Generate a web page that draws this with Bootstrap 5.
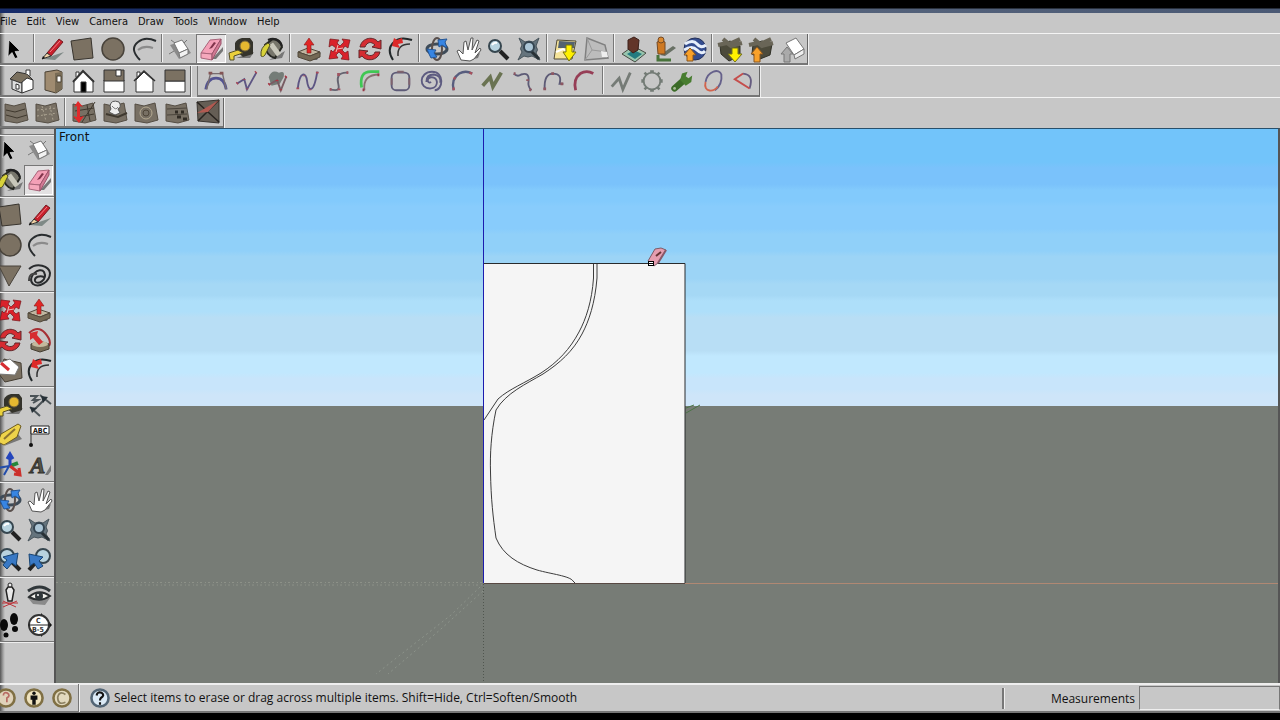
<!DOCTYPE html>
<html lang="en">
<head>
<meta charset="utf-8">
<meta name="viewport" content="width=device-width, initial-scale=1">
<title>SketchUp</title>
<link href="https://cdn.jsdelivr.net/npm/bootstrap@5.3.0/dist/css/bootstrap.min.css" rel="stylesheet">
<style>
  body { font: 12px/16px "Open Sans", "Noto Sans", sans-serif; background: #000; color: #111; }
  .app { background: linear-gradient(to right, #555 0, #a0a0a0 3px, #c7c7c7 5px); }
  .title-strip { height: 13px; background: linear-gradient(#000 0 8px, transparent 9px), linear-gradient(to right, #172c69, #1c3263 30%, #56647c 60%, #4b5a75); }
  .menus { height: 20px; padding-top: 1px; gap: 10px; font: 11px/16px "DejaVu Sans Condensed", "DejaVu Sans", sans-serif; }
  .menus a { color: #111; text-decoration: none; }
  .toolrow { height: 32px; border-top: 1px solid #f4f4f4; }
  .toolrow.low { height: 31px; }
  .strip { border-right: 1px solid #666; border-bottom: 2px solid #777; box-shadow: 1px 0 #f0f0f0; }
  .strip-main { width: 808px; padding-left: 0; }
  .strip-views { width: 191px; padding-left: 7px; }
  .strip-curves { width: 563px; margin-left: 6px; padding-left: 3px; border-left: 1px solid #777; }
  .strip-sand { width: 224px; }
  .tool { flex: 1 1 0; min-width: 0; height: 29px; padding: 0; border: 0; border-radius: 0; background: none; display: flex; align-items: center; justify-content: center; }
  .tool svg { width: 28px; height: 28px; flex: none; }
  .strip-curves .tool svg { width: 26px; height: 26px; }
  .strip-sand .tool { height: 27px; }
  .tool.pressed { background: #e3e1e2; box-shadow: inset 1px 1px #777, inset -1px -1px #fff; }
  .divide { flex: 0 0 6px; height: 28px; display: flex; justify-content: center; }
  .divide::before { content: ""; width: 2px; background: #777; border-right: 1px solid #f2f2f2; }
  .palette { width: 56px; flex: none; overflow: hidden; border-right: 2px solid #555; border-top: 1px solid #666; }
  .palette-cap { height: 6px; border-bottom: 1px solid #777; box-shadow: 0 1px #eee; }
  .pair { display: grid; grid-template-columns: 29px 29px; margin-left: -5px; }
  .pair .tool { height: 30px; }
  .pair-end { height: 5px; padding-top: 1px; }
  .pair-end::before { content: ""; display: block; height: 2px; background: #777; border-bottom: 1px solid #eee; }
  .scene { border-top: 1px solid #28506c; border-right: 2px solid #555; min-width: 0;
    background: linear-gradient(#72c4fa 0 6%, #7ac2fb 7% 10%, #82cafc 11% 13%, #88ccfc 14% 18%, #90d0f9 19% 22%, #9cd4f6 23% 27%, #a5d8f5 28% 30%, #aedffa 31% 33%, #b8def5 34% 40%, #c1e8fe 41% 44%, #c8e5fb 45% 47%, #cee5f9 48% 50%, #777c76 50%); }
  .view-name { left: 3px; top: 0; font-family: "DejaVu Sans", sans-serif; }
  .statusbar { height: 30px; border-top: 2px solid #eee; border-bottom: 2px solid #777; }
  .statusbar .tool { flex: none; width: 28px; height: 26px; }
  .statusbar .tool svg { width: 24px; height: 24px; }
  .info-buttons { margin-left: -8px; }
  .measure-label { border-left: 2px solid #777; box-shadow: inset 1px 0 #eee; width: 137px; height: 21px; padding: 3px 4px 0 0; }
  .measure-box { width: 141px; height: 24px; background: #c7c7c7; border: 1px solid #777; border-bottom-color: #eee; border-radius: 0; outline: 0; }
  .letterbox { height: 7px; background: #000; }
</style>
</head>
<body>
<div class="app vh-100 d-flex flex-column overflow-hidden">
  <div class="title-strip flex-shrink-0"></div>
  <nav class="menus d-flex flex-shrink-0" aria-label="Main menu">
    <a href="#">File</a><a href="#">Edit</a><a href="#">View</a><a href="#">Camera</a><a href="#">Draw</a><a href="#">Tools</a><a href="#">Window</a><a href="#">Help</a>
  </nav>
  <div class="toolrow d-flex flex-shrink-0">
    <div class="strip strip-main d-flex" role="toolbar" aria-label="Getting started" data-tools="select | pencil rect circle arc | component eraser* tape paint | pushpull move rotate offset | orbit hand zoom extents | addloc terrain | photo person earth | getmodel share sharecomp"></div>
  </div>
  <div class="toolrow d-flex flex-shrink-0">
    <div class="strip strip-views d-flex" role="toolbar" aria-label="Views" data-tools="iso topview front right back left"></div>
    <div class="strip strip-curves d-flex" role="toolbar" aria-label="Curves" data-tools="c1 c2 c3 c4 c5 c6 c7 c8 c9 c10 c11 c12 c13 | c14 c15 wrench c17 c18"></div>
  </div>
  <div class="toolrow low d-flex flex-shrink-0">
    <div class="strip strip-sand d-flex" role="toolbar" aria-label="Sandbox" data-tools="sand1 sand2 | smoove stamp drape detail flip"></div>
  </div>
  <main class="d-flex flex-grow-1 overflow-hidden">
    <aside class="palette" aria-label="Large tool set">
      <div class="palette-cap"></div>
      <div class="pair" data-tools="select component paint eraser*"></div><div class="pair-end"></div>
      <div class="pair" data-tools="rect pencil circle arc polygon freehand"></div><div class="pair-end"></div>
      <div class="pair" data-tools="move pushpull rotate follow scale offset"></div><div class="pair-end"></div>
      <div class="pair" data-tools="tape dimension protractor label axes text3d"></div><div class="pair-end"></div>
      <div class="pair" data-tools="orbit hand zoom extents previous next"></div><div class="pair-end"></div>
      <div class="pair" data-tools="camera look walk section"></div><div class="pair-end"></div>
    </aside>
    <section class="scene flex-grow-1 position-relative overflow-hidden" aria-label="Drawing area">
      <svg class="position-absolute top-0 start-0 w-100 h-100" viewBox="0 0 1222 554" preserveAspectRatio="xMidYMid slice" fill="none">
        <path d="M0 453.500H427M20 456H427" stroke="#8d9188" stroke-dasharray="2 3 1 2"/>
        <path d="M427.500 455V554" stroke="#50564f" stroke-dasharray="1 2"/>
        <path d="M424 458 395 486 320 545M427 462 385 500 332 545" stroke="#8d948b" stroke-dasharray="2 3"/>
        <path d="M630 284 644 276M630 279l8-3" stroke="#4b7447"/>
        <path d="M428 454.500H1222" stroke="#b08873"/>
        <path d="M428 135H629V454H428Z" fill="#f5f5f5"/>
        <path d="M427.500 0V454" stroke="#1c1cae"/>
        <path d="M428 134.500H629V454" stroke="#282a2c"/>
        <path d="M428 454.500H629" stroke="#584943"/>
        <g stroke="#3c3c3c">
          <path d="M537.500 135V149C536 172 530 190 523 203C514 220 502 233 485 244C469 254 453 260 442 270L428 291"/>
          <path d="M541 135V149C539 174 533 192 526 205C517 222 504 234 487 245C470 255 450 264 440 281C435 305 434 325 434.500 343C435 370 437 388 440 409C447 426 462 435 481 441C495 445 514 447 517 452L519 454"/>
        </g>
        <g transform="translate(591 118)"><path d="m1 14 7-12 6-1 5 2-8 13-4 3Z" fill="#e59daf" stroke="#7d5b66"/><path d="m11 16 8-13" stroke="#895969" stroke-width="2"/><path d="m9 9 5-4" stroke="#633" stroke-width="2"/><rect x="1.500" y="14.500" width="5" height="4" fill="#fff" stroke="#000"/><path d="M2 16.500h4" stroke="#000"/></g>
      </svg>
      <div class="view-name position-absolute">Front</div>
    </section>
  </main>
  <footer class="statusbar d-flex align-items-center flex-shrink-0">
    <div class="info-buttons d-flex" data-tools="geo credit claim"></div>
    <div class="divide"></div>
    <div class="d-flex ms-1" data-tools="help"></div>
    <div class="flex-grow-1">Select items to erase or drag across multiple items. Shift=Hide, Ctrl=Soften/Smooth</div>
    <label class="measure-label text-end" for="measurements">Measurements</label>
    <input class="measure-box" id="measurements" type="text">
  </footer>
  <div class="letterbox flex-shrink-0"></div>
</div>

<script>
const sheet = (inner) => `<path d="m3 6 9 2 11-3 3 17-11 3-12-2Z" fill="#787064" stroke="#544d43"/>${inner}`;
const house = (inner) => `<g stroke="#333">${inner}</g>`;
const glass = (x) => `<path d="m16 16 8 8" stroke="#222" stroke-width="4"/><circle cx="11" cy="11" r="6" fill="#b8d3df" stroke="#36464f" stroke-width="2"/><path d="M8 10q2-3 5-2" stroke="#fff" stroke-width="2"/>${x}`;
const badge = (ring, face, inner) => `<circle cx="14" cy="14" r="10" fill="${face}" stroke="${ring}" stroke-width="3"/>${inner}`;
const icons = {
  select: `<path d="m8 5 11 11-5 .5 3 6-3 1-3-6-4 4Z" fill="#000" stroke="#eee" stroke-width=".6"/>`,
  pencil: `<path d="m5 24 21-7-9 8Z" fill="#7e8986"/><path d="m9 18 12-14 4 3-12 14Z" fill="#c9202c" stroke="#751c22"/><path d="m12 17 10-11" stroke="#f28088"/><path d="m4 24 5-6 4 3Z" fill="#f0d2a4" stroke="#333"/><path d="m4 24 3-1-2-2Z" fill="#111"/>`,
  rect: `<path d="m3 6 20-3 2 20-19 2Z" fill="#7b7162" stroke="#38342e"/>`,
  circle: `<circle cx="14" cy="14" r="11" fill="#7b7162" stroke="#48433b" stroke-width="1.500"/>`,
  polygon: `<path d="M3 5h22L13 25Z" fill="#7b7162" stroke="#48433b"/>`,
  arc: `<path d="M8 15q6-5 15-2" stroke="#8b8b8b" stroke-width="2"/><path d="M10 25Q-1 14 8 7q7-6 18-1" stroke="#292d2f" stroke-width="2"/>`,
  freehand: `<path d="M4 8c8-7 20-3 21 4 0 9-11 15-17 11-7-7 7-18 11-12 4 8-7 14-9 9-1-4 5-6 9-4" stroke="#292b2d" stroke-width="2"/><path d="M4 20q0-9 8-7" stroke="#444" stroke-width="2"/>`,
  component: `<path d="m4 10 13-4 8 12-12 6Z" fill="#8b8b8b"/><path d="m8 8 8-3 6 9-9 4Z" fill="#fff" stroke="#777"/><path d="m13 18 9-4v5l-8 4Z" fill="#f2f2f2" stroke="#777"/><path d="m5 5 4 3m12-3-3 3M3 19l5-3" stroke="#777"/>`,
  eraser: `<path d="m15 24 11-12v4l-7 8Z" fill="#777"/><path d="m4 18 9-13 11-1-9 15Z" fill="#f4a0b7" stroke="#a8657a"/><path d="M4 18v5l11 2v-6Z" fill="#f5a8bc" stroke="#a8657a"/><path d="M15 19 24 4v5l-9 16Z" fill="#d27a94" stroke="#9b536a"/><path d="m12 14 5-7 2 1-4 5Z" fill="#80344b"/>`,
  tape: `<path d="M9 23h14l4-6Z" fill="#777"/><path d="M8 8q2-4 7-5h8l3 4v12l-10 3-8-7Z" fill="#34332b"/><circle cx="18" cy="11" r="5" fill="#e5b830" stroke="#77663a"/><path d="m2 18 9-3 5 3-9 3v4H3Z" fill="#ead03b" stroke="#554e27"/>`,
  paint: `<path d="m11 25 13-2 3-7Z" fill="#777"/><path d="m8 9 7-5q8 0 9 8l-7 11q-9-2-10-13Z" fill="#77766b" stroke="#262722" stroke-width="2"/><path d="m13 9 8 11" stroke="#c8c7ba" stroke-width="5"/><path d="M10 5q9-4 14 6" stroke="#222" stroke-width="2"/><path d="M10 8Q2 12 3 21q3 2 5-3l4-8Z" fill="#d8d23a" stroke="#535122"/>`,
  pushpull: `<path d="m14 25 12-7-4 7Z" fill="#666"/><path d="m3 17 10-4 12 4-10 4Z" fill="#c0b6a0" stroke="#51483a"/><path d="m3 17 12 4 10-4v5l-10 4-12-4Z" fill="#746955" stroke="#51483a"/><path d="m14 3 5 7h-3v8h-4v-8H9Z" fill="#e22625" stroke="#841b1b" stroke-width=".6"/>`,
  move: `<path d="m5 4 9 1-2 3 3 3 4-4-2-3 8 1-2 8-3-2-3 4 3 3 3-2 1 9-8-1 2-3-4-4-3 3 2 3-9 1 2-9 2 2 3-4-4-3-3 2Z" fill="#d9222a" stroke="#75151a" stroke-width=".7"/><path d="m13 10-2 7m7-4-6 1" stroke="#efb9b5"/>`,
  rotate: `<path d="M4 12C6 2 18 1 22 7l3-2v9l-9-2 3-2c-4-4-8-3-10 2Zm20 5c-2 9-14 10-18 4l-3 2v-8l9 1-3 2c4 4 9 3 10-1Z" fill="#d52b31" stroke="#62272a"/>`,
  offset: `<path d="M7 25Q0 14 8 7q6-6 18-2" stroke="#22282a" stroke-width="2"/><path d="M12 21q-1-12 12-12" stroke="#333" stroke-width="1.500"/><path d="m17 8-5 1 2 4-8-2 2-8 3 2 5-2Z" fill="#dc2928"/>`,
  orbit: `<ellipse cx="14" cy="14" rx="10" ry="5" stroke="#3e4b58" stroke-width="3"/><ellipse cx="14" cy="14" rx="5" ry="11" stroke="#594f4c" stroke-width="2"/><path d="m15 5 9-1-2 3 2 6-5-3-3 2ZM4 14l9 1-2 3 3 4-6 1-2-4Z" fill="#3785e3" stroke="#255695"/>`,
  hand: `<path d="m11 26 13-3 2-5Z" fill="#777"/><path d="m7 25-4-9 2-1 4 4 1-12 2-1 2 9 3-12h2l-1 12 5-10 2 1-4 12 5-5 1 2-7 9-4 2Z" fill="#fff" stroke="#555"/>`,
  zoom: glass(''),
  extents: `<path d="m4 3 6 4q4-2 8 0l6-4-3 8q3 4 0 7l4 7-8-4q-4 2-8 0l-6 4 4-8q-3-3 0-7Z" fill="#65747d" stroke="#48545b"/><path d="m16 16 8 8" stroke="#283136" stroke-width="3"/><circle cx="14" cy="12" r="5" fill="#acc6d6" stroke="#344450" stroke-width="2"/>`,
  addloc: `<path d="m6 5 19 1-4 18H3Z" fill="#f6e49a" stroke="#514b37"/><path d="m8 6 16 1-1 6H7Z" fill="#536271"/><path d="m5 17 7-3 7 4" stroke="#fff" stroke-width="2"/><path d="M15 10h6v7h4l-7 9-6-9h3Z" fill="#fff000" stroke="#767413"/>`,
  terrain: `<path d="m5 3 18 7 3 13-23 2Z" fill="#bcbcbc" stroke="#808080" stroke-width="1.500"/><path d="m5 3 5 12 15 2M10 15l-7 10" stroke="#999"/><path d="m19 16 6 1 1 5h-6Z" fill="#eee"/>`,
  photo: `<path d="m3 19 11-8 13 7-11 9Z" fill="#98c5ae" stroke="#474b42"/><path d="m8 19 8 5 7-5-8-4Z" fill="#237b80"/><path d="m9 5 6-3 5 3-1 10-5 3-5-4Z" fill="#623529" stroke="#3c201a"/>`,
  person: `<path d="m11 20 13-9 3 2-11 8Z" fill="#687064"/><path d="M9 20v5h13" stroke="#48733b" stroke-width="3"/><path d="M8 7q5-3 8 0v12H9Z" fill="#cf7922" stroke="#734a26"/><circle cx="12" cy="5" r="3" fill="#db892f" stroke="#734a26"/>`,
  earth: `<circle cx="15" cy="14" r="11" fill="#344d90" stroke="#25315a"/><path d="M5 9q8-5 12 0t9 1M4 15q8-5 13 0t8 1" stroke="#e7effb" stroke-width="3"/><path d="m10 13 6 7h-3v6H7v-6H4Z" fill="#f9a12a" stroke="#865521"/>`,
  getmodel: `<path d="m4 11 10-5 10 5v10l-11 5-8-7Z" fill="#4c4a3b" stroke="#303027"/><path d="m2 10 9-2 4 3 11-3M7 4l6 5 11-5" stroke="#696557" stroke-width="4"/><path d="M16 13h6v6h4l-7 8-7-8h4Z" fill="#fff000" stroke="#74721c"/>`,
  share: `<path d="m6 9 9-3 10 3-2 11-10 4-8-5Z" fill="#4c4a3b" stroke="#303027"/><path d="m2 10 9-2 4 3 11-3M7 4l6 5 11-5" stroke="#696557" stroke-width="4"/><path d="m10 12 6 7h-3v8H7v-8H4Z" fill="#f9a12a" stroke="#865521"/>`,
  sharecomp: `<path d="m8 8 10-5 8 11-10 6Z" fill="#fff" stroke="#777"/><path d="m16 20 10-6v5l-9 5Z" fill="#eee" stroke="#777"/><path d="m9 12 6 7h-3v8H6v-8H3Z" fill="#aaa" stroke="#777"/>`,
  iso: house(`<path d="m4 12 10 3v11L4 22Z" fill="#ddd"/><path d="m14 14 6-5 5 4v9l-11 4Z" fill="#fff"/><path d="m2 12 7-7 10 2 6 6-6-2-6 5Z" fill="#7a705f"/><path d="M18 6V3h4v6M8 17v5h3v-4Z" fill="#fff"/>`),
  topview: `<path d="m6 5 12-2 5 2v17l-6 4-11-3Z" fill="#9f8b70" stroke="#4b4235"/><path d="m16 6 7-1v17l-7 4Z" fill="#796c56"/><path d="M18 9h4v6h-4Z" fill="#fff" stroke="#4b4235"/>`,
  front: house(`<path d="M5 13h19v12H5Z" fill="#fff"/><path d="M7 10V5h3v4" fill="#fff"/><path d="m4 15 10-11 11 11" stroke-width="2" fill="#fff"/><path d="M12 15h5v10h-5Z" fill="#000"/>`),
  right: house(`<path d="M4 13h20v12H4Z" fill="#fff"/><path d="M4 3h20v11H4Z" fill="#7b7162"/><path d="M16 3h5v6h-5Z" fill="#fff"/>`),
  back: house(`<path d="M6 13 14 5l9 8v12H6Z" fill="#fff"/><path d="M7 10V5h3v3" fill="#fff"/><path d="m4 14 10-10 11 10" stroke-width="1.500"/>`),
  left: house(`<path d="M4 14h20v11H4Z" fill="#fff"/><path d="M4 3h20v11H4Z" fill="#7b7162"/>`),
  c1: `<path d="M3 23Q5 11 14 11t11 12" stroke="#535391" stroke-width="3"/><path d="M4 23 8 6h13l4 17" stroke="#776d70" stroke-width="1.500"/><path d="M6 4h4v3H6Zm12 0h4v3h-4Z" fill="#835454"/>`,
  c2: `<path d="m3 17 8-5 3 11L24 5" stroke="#5d5583" stroke-width="2"/><path d="m3 17 1-1m7-4v1m3 9v1m9-18 1-1" stroke="#ac4350" stroke-width="3"/>`,
  c3: `<path d="M4 10q3-9 11-5 7-3 5 5l-4 7-9 2Z" fill="#747c77"/><path d="m4 18 9-5 4 11 6-15" stroke="#795c63" stroke-width="2"/><path d="m4 18 1-1m8-4v1m4 9v1m5-14 1-1" stroke="#ad3442" stroke-width="3"/>`,
  c4: `<path d="M3 22C5 3 12 4 13 14s7 16 11-10" stroke="#5d5583" stroke-width="2"/><path d="M3 21v2m7-15v1m6 14v1m8-20v2" stroke="#a94a58" stroke-width="3"/>`,
  c5: `<path d="M4 23c12 3 10-2 9-7s-1-12 11-11" stroke="#656370" stroke-width="2"/><path d="M4 23h2m8-1v2m-2-17h3m7-2h2" stroke="#a05461" stroke-width="3"/>`,
  c6: `<path d="M5 21Q2 4 15 4h9" stroke="#40c753" stroke-width="3"/><path d="M8 24Q6 7 24 7" stroke="#877071" stroke-width="2"/><path d="M7 22v3M23 6v3" stroke="#983947" stroke-width="2"/>`,
  c7: `<rect x="5" y="5" width="19" height="19" rx="5" stroke="#5e5b77" stroke-width="2"/><path d="M11 4h7M5 11v7m19-7v7" stroke="#80636d" stroke-width="2"/>`,
  c8: `<path d="M14 15c-3 3-6-4 0-5 8-1 9 11 0 12-14 1-13-18 1-18 14 0 12 20 3 20M9 15q0-8 8-8 8 1 7 9" stroke="#5d5b80" stroke-width="2"/>`,
  c9: `<path d="M5 24Q2 12 11 6q7-4 14 0" stroke="#575d7e" stroke-width="2.500"/><path d="M5 21v3m17-19 3 1M5 12l2-2" stroke="#a7505c" stroke-width="2.500"/>`,
  c10: `<path d="m4 19 8-9 3 10L24 5" stroke="#6a7352" stroke-width="4"/>`,
  c11: `<path d="M4 6q4 4 8 1 9-3 8 7-1 6 3 10" stroke="#5d5b76" stroke-width="2"/><path d="M4 6h2m13 6v2m2 9 2 1" stroke="#8d5762" stroke-width="3"/>`,
  c12: `<path d="M4 23Q3 6 13 6t7 11h4" stroke="#5d5b76" stroke-width="2"/><path d="M4 21v3m7-18h3m7 11h3" stroke="#8d5762" stroke-width="3"/>`,
  c13: `<path d="M5 24Q2 12 10 6q7-4 14 0" stroke="#963e56" stroke-width="3"/>`,
  c14: `<path d="m4 20 8-9 4 12L24 5" stroke="#757b76" stroke-width="3"/>`,
  c15: `<circle cx="14" cy="14" r="9" stroke="#737b75" stroke-width="2"/><path d="M12 4h4m-4 20h4M4 12v4m20-4v4M6 7l2-2m12 18 2-2M6 21l2 2M20 5l2 2" stroke="#737b75" stroke-width="3"/>`,
  wrench: `<path d="m6 22 9-8" stroke="#3b6b27" stroke-width="7" stroke-linecap="round"/><path d="m12 13 2-7 6-2-2 5 3 2 4-3-1 7-6 4Z" fill="#487d30"/><circle cx="6" cy="22" r="1.500" fill="#a9bc98"/>`,
  c17: `<path d="M6 15C8 3 21 0 23 7c1 8-3 14-7 17" stroke="#66618b" stroke-width="2"/><path d="M6 15c-3 12 10 11 13 5" stroke="#d1644d" stroke-width="2"/>`,
  c18: `<path d="m13 6q12 1 7 16" stroke="#665c80" stroke-width="2"/><path d="m13 6-9 6 16 10" stroke="#c54e4c" stroke-width="2"/>`,
  sand1: sheet(`<path d="m4 12 9 2 10-3M4 17l11 3 10-3" stroke="#3f382e"/>`),
  sand2: sheet(`<path d="m4 12 20-2M4 18l20-3M9 8l4 15M17 8l3 14" stroke="#aba391" stroke-dasharray="2"/>`),
  smoove: sheet(`<path d="m5 13 19-3M4 20l20-4M17 7l3 16M25 4 12 24" stroke="#3f392f"/><path d="m8 3 5 6-3-1v11l4-1-5 7-6-7 4 1V8L4 9Z" fill="#e12a2b"/>`),
  stamp: sheet(`<path d="m5 16 12 3 9-4" stroke="#3f392f" stroke-width="2"/><path d="M9 8q1-7 9-4 3 5-1 7l2 4-5 2-6-3 2-3Z" fill="#eee" stroke="#555"/><path d="M11 8q4 5 6 1" stroke="#777"/>`),
  drape: sheet(`<circle cx="14" cy="15" r="6" stroke="#b4a991"/><circle cx="14" cy="15" r="3" stroke="#4d4437"/>`),
  detail: sheet(`<path d="m4 11 20-1M4 17l20-1" stroke="#4b453c"/><path d="M12 14h3m3 0h3m-7 5h4m2 2h4" stroke="#302b24" stroke-width="3"/>`),
  flip: `<path d="m3 4 22-2v23l-21-2Z" fill="#655e55" stroke="#38342f"/><path d="m3 4 22 20M4 23 25 2" stroke="#27231f" stroke-width="1.500"/><path d="m3 15 22-13-11 12Z" fill="#b15a51"/>`,
  follow: `<path d="M4 7Q13-1 20 7t4 13" stroke="#a62f34" stroke-width="2"/><path d="m6 18 9-3 9 3v5l-9 3-9-3Z" fill="#766b56" stroke="#443d32"/><ellipse cx="15" cy="18" rx="8" ry="3" fill="#c4b99e"/><path d="m5 7 8-2-1 4 6 7-4 3-6-7-3 2Z" fill="#d62d31"/>`,
  scale: `<path d="m8 3 17 4 1 15-17 4-6-8Z" fill="#7b7162" stroke="#443d32"/><path d="m2 7 12-4 9 8-4 8-17-1Z" fill="#fff" stroke="#777"/><path d="m5 7 8 7" stroke="#d62d31" stroke-width="3"/>`,
  dimension: `<path d="m10 18 11-11M5 16l10 9M15 4l11 9M5 5h7l-4 4h5l-5 3" stroke="#4b5357" stroke-width="2"/><path d="m5 16 7 1-5 5Zm11-11 7 1-5 6Z" fill="#263036"/>`,
  protractor: `<path d="m8 25 18-7-4-5Z" fill="#777"/><path d="m2 21 3-8L22 3l3 2-4 11-13 8Z" fill="#eed34a" stroke="#6c5b20"/><path d="m8 18 11-10" stroke="#8b7330" stroke-width="2"/>`,
  label: `<path d="M6 23V5" stroke="#333"/><circle cx="6" cy="24" r="2" fill="#111"/><path d="M6 5h18v8H6Z" fill="#fff" stroke="#222"/><text x="8" y="12" font-family="DejaVu Sans Condensed, sans-serif" font-size="7" font-weight="bold" fill="#111">ABC</text>`,
  axes: `<path d="m14 15 8-3" stroke="#25863b" stroke-width="4"/><path d="M14 15V3m-3 5 3-5 3 5" stroke="#2445bc" stroke-width="3"/><path d="m14 15 9 7m-5 1 6 1-1-7" stroke="#cc302b" stroke-width="3"/><path d="m2 17 11-2-5 9" stroke="#244eab" stroke-width="2"/>`,
  text3d: `<path d="m20 24 6-10v6l-3 4Z" fill="#777"/><text x="5" y="22" font-family="Liberation Serif, serif" font-size="23" font-weight="bold" font-style="italic" fill="#55544b" stroke="#33322d">A</text>`,
  previous: `<path d="m16 16 8 8" stroke="#222" stroke-width="4"/><circle cx="11" cy="10" r="7" fill="#b8d3df" stroke="#36464f" stroke-width="2"/><path d="m22 7-2 13-4-3-5 6-4-4 4-5-4-3Z" fill="#3979c5" stroke="#174575"/>`,
  next: `<path d="m11 16-7 8" stroke="#222" stroke-width="4"/><circle cx="18" cy="10" r="7" fill="#b8d3df" stroke="#36464f" stroke-width="2"/><path d="m4 8 14 3-4 4 4 5-5 3-4-6-4 3Z" fill="#3979c5" stroke="#174575"/>`,
  camera: `<path d="m10 9 2-3h4l2 3-2 11h-4Z" fill="#e9e9e9" stroke="#222" stroke-width="1.500"/><circle cx="14" cy="4" r="2" fill="#eee" stroke="#222"/><path d="m7 20 13 6M7 26l14-6M6 22h16" stroke="#bb3339"/>`,
  look: `<path d="m3 17 22 0-5 7-12-1Z" fill="#8a8a8a"/><path d="M3 10q12-8 22 0" stroke="#30373a" stroke-width="3"/><path d="M4 16q10-9 21-1-10 7-21 1Z" fill="#f1f1ec" stroke="#2a2e30" stroke-width="2"/><circle cx="14" cy="15" r="4" fill="#30373a"/><circle cx="13" cy="14" r="1" fill="#fff"/>`,
  walk: `<ellipse cx="8" cy="14" rx="4" ry="6" fill="#090909"/><ellipse cx="18" cy="8" rx="4" ry="6" fill="#090909"/><circle cx="10" cy="24" r="2.500" fill="#090909"/><circle cx="19" cy="18" r="3" fill="#090909"/>`,
  section: `<path d="m16 2 11 12-11 12Z" fill="#111"/><circle cx="14" cy="14" r="10" fill="#fff" stroke="#333" stroke-width="2"/><path d="M3 14h22" stroke="#222"/><text x="11" y="12" font-family="DejaVu Sans Condensed, sans-serif" font-size="7" font-weight="bold" fill="#333">C</text><text x="7" y="21" font-family="DejaVu Sans Condensed, sans-serif" font-size="7" font-weight="bold" fill="#333">B-5</text>`,
  geo: badge('#807044', '#dfd2ba', `<path d="M11 11q0-4 4-3 5 3 0 6v5" stroke="#b86c64" stroke-width="2"/>`),
  credit: badge('#807044', '#eee2bd', `<circle cx="14" cy="8.500" r="2" fill="#111"/><path d="M10 11h8v5h-2v6h-4v-6h-2Z" fill="#111"/>`),
  claim: badge('#807044', '#e2d9be', `<path d="M18 10q-7-5-9 3 0 10 9 6" stroke="#8b8061" stroke-width="2"/>`),
  help: badge('#526575', '#dbeaf6', `<path d="M10 11q1-5 6-3 4 3-1 6-1 1-1 3m0 2v3" stroke="#111" stroke-width="2.500"/>`)
};
document.querySelectorAll('[data-tools]').forEach(bar => {
  bar.innerHTML = bar.dataset.tools.split(' ').map(t => {
    if (t === '|') return '<span class="divide"></span>';
    const name = t.replace('*', '');
    return `<button type="button" class="tool btn${t !== name ? ' pressed' : ''}" aria-label="${name}"><svg viewBox="0 0 28 28" fill="none" aria-hidden="true">${icons[name]}</svg></button>`;
  }).join('');
});
</script>
<script src="https://cdn.jsdelivr.net/npm/bootstrap@5.3.0/dist/js/bootstrap.bundle.min.js"></script>
</body>
</html>
